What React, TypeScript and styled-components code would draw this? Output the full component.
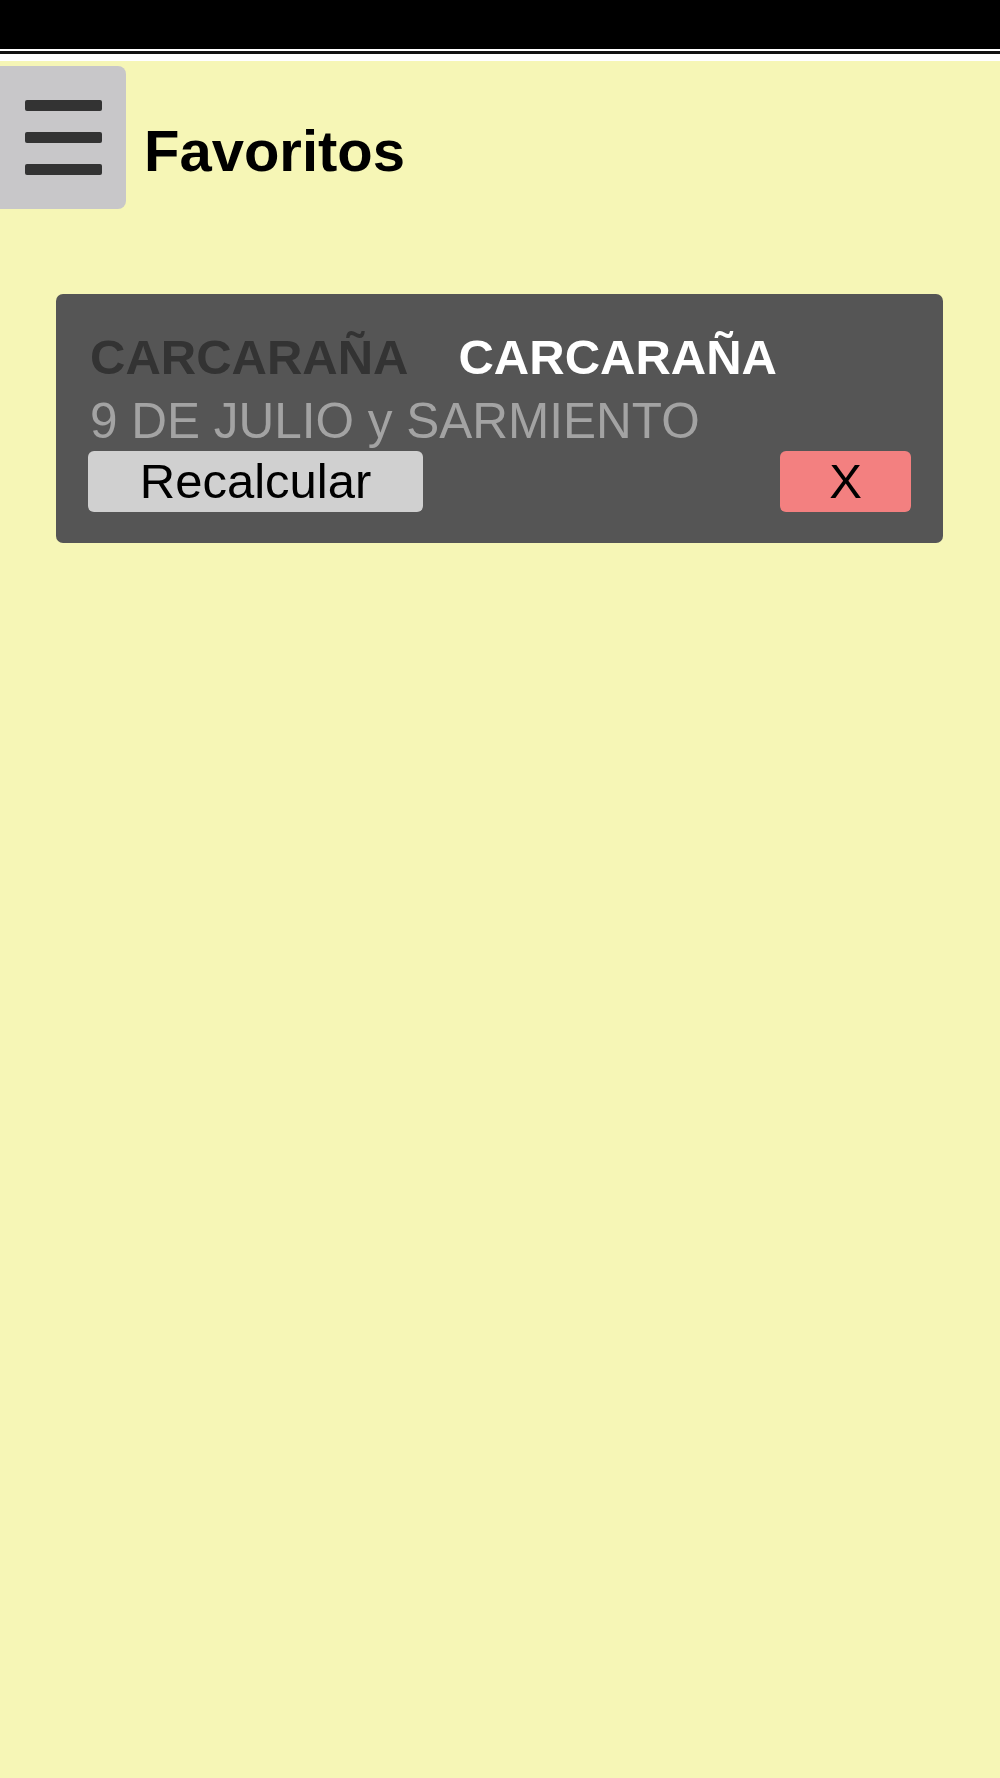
import React from 'react'
import styled, { createGlobalStyle } from 'styled-components'

const GlobalStyle = createGlobalStyle`
    html, body {
        margin: 0;
        padding: 0;
        background: #f6f6b6;
        font-family: 'Liberation Sans', Arial, sans-serif;
    }
`

const Page = styled.div`
    min-height: 1778px;
    background: #f6f6b6;
    display: flex;
    flex-direction: column;
`

const StatusBar = styled.div`
    height: 49px;
    background: #000;
    border-bottom: 2px solid #fff;
`

const StatusRule = styled.div`
    height: 3px;
    background: #111;
    border-bottom: 7px solid #fff;
`

const TopBar = styled.div`
    display: flex;
    align-items: center;
    gap: 18px;
    margin-top: 5px;
`

const MenuButton = styled.button`
    width: 126px;
    height: 143px;
    border: 0;
    padding: 0;
    border-radius: 0 8px 8px 0;
    background: #c8c7c9;
    display: flex;
    flex-direction: column;
    align-items: center;
    justify-content: center;
    gap: 21px;
    span {
        display: block;
        width: 77px;
        height: 11px;
        border-radius: 2px;
        background: #333;
    }
`

const Title = styled.h1`
    margin: 26px 0 0;
    font-size: 58px;
    font-weight: 700;
    color: #000;
`

const List = styled.div`
    display: flex;
    flex-direction: column;
    padding: 85px 57px 0 56px;
`

const Card = styled.div`
    background: #555;
    border-radius: 7px;
    padding: 35px 32px 31px 34px;
    display: flex;
    flex-direction: column;
`

const Cities = styled.div`
    display: flex;
    gap: 50px;
    font-size: 49px;
    font-weight: 700;
    line-height: 56px;
`

const City = styled.span<{ $light?: boolean }>`
    color: ${p => (p.$light ? '#fff' : '#333')};
`

const Address = styled.div`
    margin-top: 8px;
    font-size: 49.5px;
    line-height: 56px;
    color: #a3a3a3;
`

const Actions = styled.div`
    display: flex;
    justify-content: space-between;
    margin-top: 2px;
    margin-left: -2px;
`

const ActionButton = styled.button<{ $danger?: boolean }>`
    height: 61px;
    width: ${p => (p.$danger ? '131px' : '335px')};
    border: 0;
    border-radius: 6px;
    background: ${p => (p.$danger ? '#f38080' : '#d0d0d0')};
    color: #000;
    font-family: 'Liberation Sans', Arial, sans-serif;
    font-size: 49px;
    line-height: 1;
    padding: 0;
`

const favoritos = [
    { desde: 'CARCARAÑA', hasta: 'CARCARAÑA', direccion: '9 DE JULIO y SARMIENTO' },
]

const App = () => {
    return (
        <Page>
            <GlobalStyle />
            <StatusBar />
            <StatusRule />
            <TopBar>
                <MenuButton aria-label="menu">
                    <span />
                    <span />
                    <span />
                </MenuButton>
                <Title>Favoritos</Title>
            </TopBar>
            <List>
                {favoritos.map((f, i) => (
                    <Card key={i}>
                        <Cities>
                            <City>{f.desde}</City>
                            <City $light>{f.hasta}</City>
                        </Cities>
                        <Address>{f.direccion}</Address>
                        <Actions>
                            <ActionButton>Recalcular</ActionButton>
                            <ActionButton $danger>X</ActionButton>
                        </Actions>
                    </Card>
                ))}
            </List>
        </Page>
    )
}

export default App
